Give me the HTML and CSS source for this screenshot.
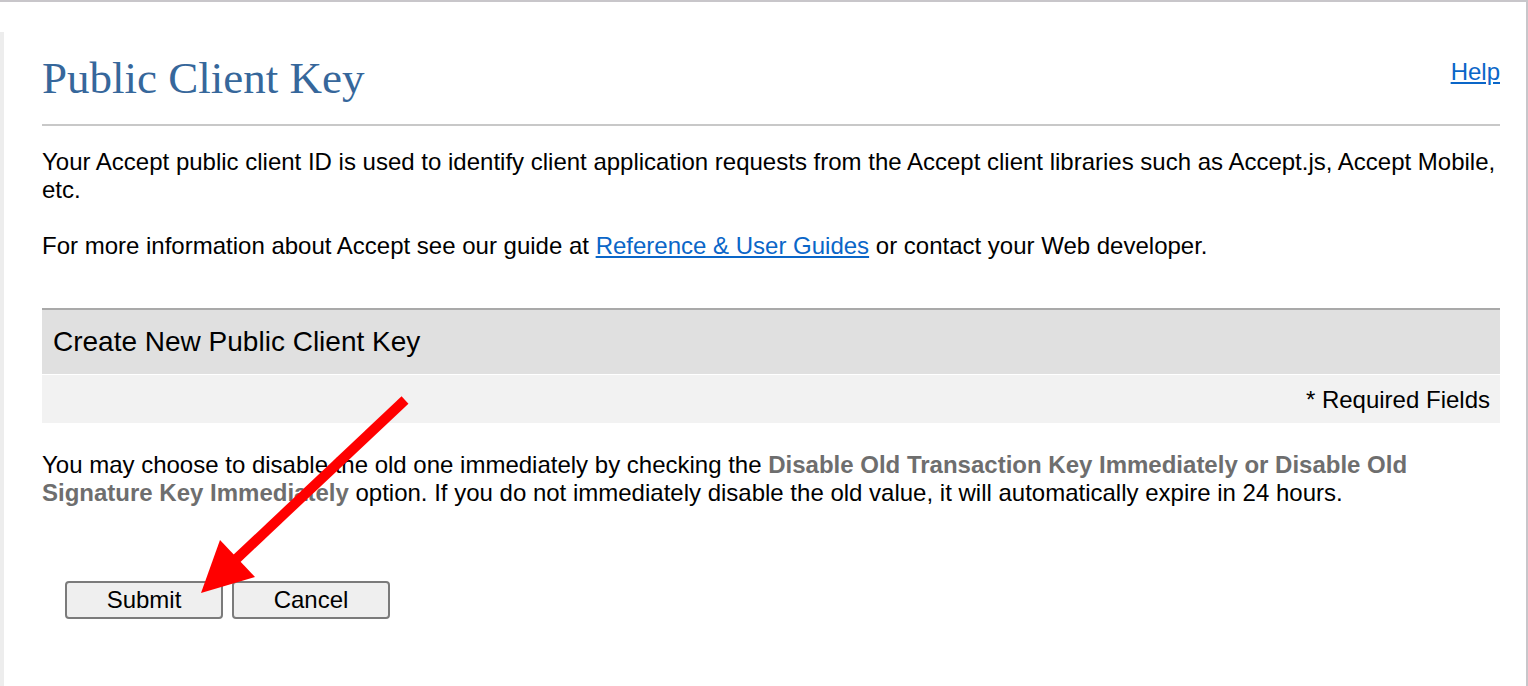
FILE: index.html
```html
<!DOCTYPE html>
<html lang="en">
<head>
<meta charset="utf-8">
<title>Public Client Key</title>
<link rel="stylesheet" href="styles.css">
</head>
<body>
<div class="frame">
  <div class="side-strip"></div>
  <main class="content">
    <div class="title-row">
      <h1 class="title">Public Client Key</h1>
      <a class="help" href="#">Help</a>
    </div>
    <p class="text">Your Accept public client ID is used to identify client application requests from the Accept client libraries such as Accept.js, Accept Mobile, etc.</p>
    <p class="text">For more information about Accept see our guide at <a class="link" href="#">Reference &amp; User Guides</a> or contact your Web developer.</p>
    <section class="panel">
      <div class="panel-head">Create New Public Client Key</div>
      <div class="panel-sub">* Required Fields</div>
    </section>
    <p class="text note">You may choose to disable the old one immediately by checking the <b class="em">Disable Old Transaction Key Immediately or Disable Old Signature Key Immediately</b> option. If you do not immediately disable the old value, it will automatically expire in 24 hours.</p>
    <div class="actions">
      <button class="btn" type="button">Submit</button>
      <button class="btn" type="button">Cancel</button>
    </div>
  </main>
  <svg class="arrow" width="1528" height="686" viewBox="0 0 1528 686" aria-hidden="true">
    <line x1="405" y1="400" x2="232" y2="563" stroke="#ff0000" stroke-width="10"/>
    <polygon points="201,593 220,540 255,577" fill="#ff0000"/>
  </svg>
</div>
</body>
</html>
```
FILE: styles.css
```css
html, body {
  margin: 0;
  padding: 0;
  background: #ffffff;
}
body {
  width: 1528px;
  height: 686px;
  overflow: hidden;
  font-family: "Liberation Sans", Arial, sans-serif;
  color: #000000;
}
.frame {
  position: relative;
  box-sizing: border-box;
  width: 1528px;
  height: 686px;
  border-top: 2px solid #c8c6ca;
  border-right: 2px solid #c8c6ca;
  display: flex;
  align-items: flex-start;
}
.side-strip {
  width: 4px;
  height: 656px;
  margin-top: 30px;
  background: #ededed;
  flex: none;
}
.content {
  flex: 1;
  padding: 0 26px 0 38px;
}
.title-row {
  display: flex;
  justify-content: space-between;
  align-items: center;
  padding: 50px 0 20px;
  border-bottom: 2px solid #c8c8c8;
}
.title {
  margin: 0;
  font-family: "Liberation Serif", Georgia, serif;
  font-weight: normal;
  font-size: 45px;
  line-height: 52px;
  color: #36679b;
}
.help {
  font-size: 24px;
  line-height: 28px;
  color: #0a66c8;
  text-decoration: underline;
  align-self: flex-start;
  margin-top: 6px;
}
.text {
  font-size: 24px;
  line-height: 27.6px;
  margin: 0 0 29px;
}
.content > .text:first-of-type {
  margin-top: 22px;
}
.link {
  color: #0a66c8;
  text-decoration: underline;
}
.panel {
  margin-top: 48px;
}
.panel-head {
  border-top: 2px solid #a9a9a9;
  background: #e0e0e0;
  font-size: 28px;
  line-height: 32px;
  padding: 16px 11px;
}
.panel-sub {
  margin-top: 1px;
  background: #f2f2f2;
  font-size: 24px;
  line-height: 27.6px;
  padding: 11px 10px 10px;
  text-align: right;
}
.note {
  margin-top: 28px;
}
.em {
  color: #6e6e6e;
  font-weight: bold;
}
.actions {
  display: flex;
  gap: 9px;
  padding-left: 23px;
  margin-top: 74px;
}
.btn {
  box-sizing: border-box;
  width: 158px;
  height: 38px;
  border: 2px solid #7b7b7b;
  border-radius: 4px;
  background: #efefef;
  font-family: "Liberation Sans", Arial, sans-serif;
  font-size: 24px;
  color: #000000;
  padding: 0;
}
.arrow {
  position: absolute;
  left: 0;
  top: -2px;
  pointer-events: none;
}
```
